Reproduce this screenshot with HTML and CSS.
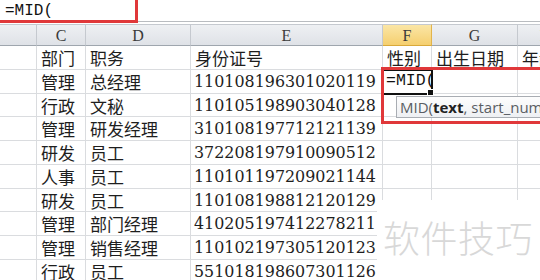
FILE: index.html
```html
<!doctype html>
<html lang="zh-CN">
  <head>
    <meta charset="UTF-8" />
    <title>MID 函数</title>
    <link rel="stylesheet" href="styles.css">
  </head>
  <body>
    <div class="window">
      <!-- formula bar -->
      <div class="formula-bar">
        <span class="formula">=MID(</span>
        <div class="mark mark-formula"></div>
      </div>

      <!-- sheet -->
      <div class="sheet">
        <div class="col-head"></div>
        <div class="col-head">C</div>
        <div class="col-head">D</div>
        <div class="col-head">E</div>
        <div class="col-head active">F</div>
        <div class="col-head">G</div>
        <div class="col-head">H</div>

        <div class="cell"></div><div class="cell">部门</div><div class="cell">职务</div><div class="cell">身份证号</div><div class="cell">性别</div><div class="cell">出生日期</div><div class="cell">年龄</div>
        <div class="cell"></div><div class="cell">管理</div><div class="cell">总经理</div><div class="cell num">110108196301020119</div><div class="cell editing"><span class="formula">=MID(</span><span class="caret"></span><span class="handle"></span></div><div class="cell"></div><div class="cell"></div>
        <div class="cell"></div><div class="cell">行政</div><div class="cell">文秘</div><div class="cell num">110105198903040128</div><div class="cell"></div><div class="cell"></div><div class="cell"></div>
        <div class="cell"></div><div class="cell">管理</div><div class="cell">研发经理</div><div class="cell num">310108197712121139</div><div class="cell"></div><div class="cell"></div><div class="cell"></div>
        <div class="cell"></div><div class="cell">研发</div><div class="cell">员工</div><div class="cell num">372208197910090512</div><div class="cell"></div><div class="cell"></div><div class="cell"></div>
        <div class="cell"></div><div class="cell">人事</div><div class="cell">员工</div><div class="cell num">110101197209021144</div><div class="cell"></div><div class="cell"></div><div class="cell"></div>
        <div class="cell"></div><div class="cell">研发</div><div class="cell">员工</div><div class="cell num">110108198812120129</div><div class="cell"></div><div class="cell"></div><div class="cell"></div>
        <div class="cell"></div><div class="cell">管理</div><div class="cell">部门经理</div><div class="cell num">410205197412278211</div><div class="cell"></div><div class="cell"></div><div class="cell"></div>
        <div class="cell"></div><div class="cell">管理</div><div class="cell">销售经理</div><div class="cell num">110102197305120123</div><div class="cell"></div><div class="cell"></div><div class="cell"></div>
        <div class="cell"></div><div class="cell">行政</div><div class="cell">员工</div><div class="cell num">551018198607301126</div><div class="cell"></div><div class="cell"></div><div class="cell"></div>
      </div>

      <!-- overlays -->
      <div class="tooltip">MID(<b>text</b>, start_num, num_chars)</div>
      <div class="mark mark-cell"></div>
      <div class="watermark">软件技巧</div>
    </div>
  </body>
</html>
```

FILE: styles.css
```css
body {
  margin: 0;
  background: #fff;
  overflow: hidden;
}

.window {
  position: relative;
  width: 540px;
  height: 280px;
  overflow: hidden;
  font-family: "Noto Sans CJK SC", sans-serif;
  color: #1e1e1e;
}

.formula-bar {
  position: relative;
  height: 22px;
  padding-left: 5px;
  border-bottom: 1px solid #b9bcc0;
  box-sizing: border-box;
  display: flex;
  align-items: center;
}

.formula {
  font-family: "Liberation Mono", monospace;
  font-size: 16px;
  color: #111;
  line-height: 1;
}

.mark {
  position: absolute;
  border: 3px solid #e0383a;
  box-sizing: border-box;
}

.mark-formula {
  left: -3px;
  top: -4px;
  width: 141px;
  height: 27px;
}

.sheet {
  margin-top: 2px;
  display: grid;
  grid-template-columns: 37px 49px 105px 192px 49px 86px 56px;
  grid-template-rows: 22px;
  grid-auto-rows: 23.75px;
  width: 574px;
}

.col-head {
  background: linear-gradient(#eef0f3, #dfe2e7);
  border-top: 1px solid #c5c9cf;
  border-right: 1px solid #c5c9cf;
  border-bottom: 1px solid #9fa6ae;
  box-sizing: border-box;
  font-family: "Liberation Serif", serif;
  font-size: 16px;
  color: #3a3a3a;
  text-align: center;
  line-height: 21px;
}

.col-head.active {
  background: linear-gradient(#fbe6a6, #f5cf6f);
  border-right-color: #e2b44c;
  border-bottom-color: #d9a93a;
}

.cell {
  border-right: 1px solid #dadcdf;
  border-bottom: 1px solid #dadcdf;
  box-sizing: border-box;
  padding: 1px 0 0 4px;
  font-size: 17px;
  line-height: 22px;
  white-space: nowrap;
}

.num {
  font-family: "DejaVu Serif", serif;
  font-size: 15.9px;
  padding-left: 3px;
}

.editing {
  position: relative;
  outline: 2px solid #111;
  outline-offset: -1px;
  padding: 0 0 0 3px;
  display: flex;
  align-items: center;
}

.editing .formula {
  font-size: 16.5px;
}

.caret {
  width: 1px;
  height: 16px;
  background: #000;
  margin-left: 1px;
}

.handle {
  position: absolute;
  right: -3px;
  bottom: -3px;
  width: 5px;
  height: 5px;
  background: #111;
  border: 1px solid #fff;
}

.tooltip {
  position: absolute;
  left: 396px;
  top: 96px;
  height: 22px;
  padding: 0 6px 0 3px;
  background: linear-gradient(#fdfdfd, #eef0f3);
  border: 1px solid #a9adb3;
  box-sizing: border-box;
  font-family: "Open Sans", sans-serif;
  font-size: 15px;
  line-height: 20px;
  color: #5a5e64;
  white-space: nowrap;
}

.tooltip b {
  color: #222;
}

.mark-cell {
  left: 381px;
  top: 67px;
  width: 170px;
  height: 57px;
}

.watermark {
  position: absolute;
  left: 377px;
  top: 200px;
  width: 163px;
  height: 80px;
  background: #fff;
  padding: 19px 0 0 6px;
  box-sizing: border-box;
  font-size: 37px;
  font-weight: 300;
  line-height: 1;
  color: #d8d8d8;
  letter-spacing: 0.5px;
  white-space: nowrap;
}
```
